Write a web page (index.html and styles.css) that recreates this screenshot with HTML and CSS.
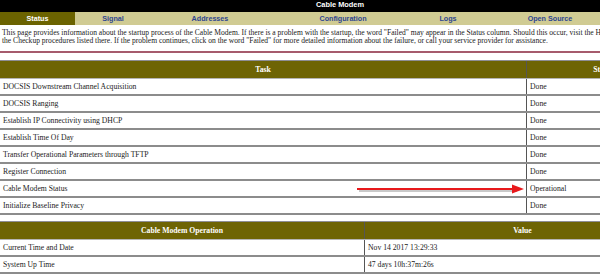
FILE: index.html
```html
<!DOCTYPE html>
<html lang="en">
<head>
    <meta charset="UTF-8">
    <meta name="viewport" content="width=device-width, initial-scale=1.0">
    <title>Cable Modem Status</title>
    <link rel="stylesheet" href="styles.css">
</head>
<body>
    <div class="page">
        <div class="topbar">Cable Modem</div>
        <table class="tabs">
          <tr>
            <td class="tab-status active">Status</td>
            <td class="tab-signal">Signal</td>
            <td class="tab-addresses">Addresses</td>
            <td class="tab-config">Configuration</td>
            <td class="tab-logs">Logs</td>
            <td class="tab-source">Open Source</td>
            <td class="tab-help">Help</td>
          </tr>
        </table>

        <p class="intro">
          This page provides information about the startup process of the Cable Modem. If there is a problem with the startup, the word "Failed" may appear in the Status column. Should this occur, visit the Help page and follow<br>
          the Checkup procedures listed there. If the problem continues, click on the word "Failed" for more detailed information about the failure, or call your service provider for assistance.
        </p>
        <div class="divider"></div>

        <!-- startup procedure -->
        <table class="grid startup">
          <tr><th class="col-task">Task</th><th>Status</th></tr>
          <tr><td>DOCSIS Downstream Channel Acquisition</td><td>Done</td></tr>
          <tr><td>DOCSIS Ranging</td><td>Done</td></tr>
          <tr><td>Establish IP Connectivity using DHCP</td><td>Done</td></tr>
          <tr><td>Establish Time Of Day</td><td>Done</td></tr>
          <tr><td>Transfer Operational Parameters through TFTP</td><td>Done</td></tr>
          <tr><td>Register Connection</td><td>Done</td></tr>
          <tr><td>Cable Modem Status</td><td>Operational</td></tr>
          <tr><td>Initialize Baseline Privacy</td><td>Done</td></tr>
        </table>

        <!-- operation -->
        <table class="grid operation">
          <tr><th class="col-name">Cable Modem Operation</th><th>Value</th></tr>
          <tr><td>Current Time and Date</td><td>Nov 14 2017 13:29:33</td></tr>
          <tr><td>System Up Time</td><td>47 days 10h:37m:26s</td></tr>
        </table>

        <svg class="arrow" width="176" height="14" viewBox="0 0 176 14">
          <line x1="2" y1="8" x2="160" y2="8" stroke="#c9c9c9" stroke-width="2"/>
          <line x1="0" y1="6" x2="158" y2="6" stroke="#e8191c" stroke-width="2"/>
          <polygon points="155,1.5 167,6 155,10.5" fill="#e8191c"/>
        </svg>
    </div>
</body>
</html>
```

FILE: styles.css
```css
html, body {
  margin: 0;
  overflow: hidden;
  background: #fff;
}

.page {
  position: relative;
  width: 680px;
  font-family: "Liberation Serif", "Times New Roman", serif;
  color: #1a1a1a;
}

.topbar {
  height: 12px;
  line-height: 12px;
  background: #000;
  color: #fff;
  text-align: center;
  font: bold 7.4px "Liberation Sans", Arial, sans-serif;
}

.tabs {
  width: 680px;
  border-collapse: collapse;
  table-layout: fixed;
}

.tabs td {
  height: 13px;
  padding: 0;
  background: #d0cb93;
  color: #2e4690;
  text-align: center;
  font: bold 7.2px "Liberation Sans", Arial, sans-serif;
}

.tabs td.active {
  background: #6b6300;
  color: #fff;
}

.tab-status { width: 75px; }
.tab-signal { width: 76px; }
.tab-addresses { width: 118px; }
.tab-config { width: 148px; }
.tab-logs { width: 62px; }
.tab-source { width: 142px; }

.intro {
  margin: 4px 0 0 2px;
  font-size: 7.55px;
  line-height: 8px;
  white-space: nowrap;
}

.divider {
  margin-top: 6px;
  height: 2px;
  background: #a65b6c;
}

.grid {
  width: 680px;
  border-collapse: collapse;
  table-layout: fixed;
  font-size: 7.7px;
}

.grid th {
  height: 17px;
  padding: 0;
  background: #6e6404;
  color: #fff;
  font-weight: bold;
  text-align: center;
  border-top: 1px solid #8e8e96;
  border-bottom: 1px solid #b5b5b5;
}

.grid td {
  height: 15px;
  padding: 0 3px;
  border-bottom: 2px solid #8c8c8c;
}

.grid th + th,
.grid td + td {
  border-left: 1px solid #555;
}

.startup {
  margin-top: 7px;
}

.startup .col-task { width: 526px; }

.operation {
  margin-top: 6px;
}

.operation .col-name { width: 364px; }

.arrow {
  position: absolute;
  left: 357px;
  top: 183px;
}
```
